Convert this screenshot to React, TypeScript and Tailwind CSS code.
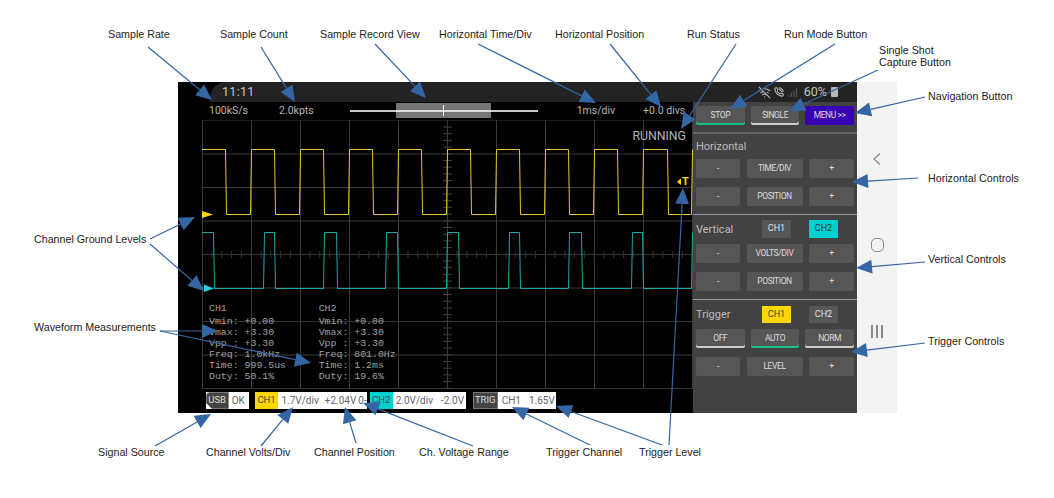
import { PhoneCall, WifiOff } from 'lucide-react';

const labels = [
  { text: 'Sample Rate', left: 108, top: 28 },
  { text: 'Sample Count', left: 220, top: 28 },
  { text: 'Sample Record View', left: 320, top: 28 },
  { text: 'Horizontal Time/Div', left: 439, top: 28 },
  { text: 'Horizontal Position', left: 555, top: 28 },
  { text: 'Run Status', left: 687, top: 28 },
  { text: 'Run Mode Button', left: 784, top: 28 },
  { text: 'Single Shot', left: 879, top: 44 },
  { text: 'Capture Button', left: 879, top: 56 },
  { text: 'Navigation Button', left: 928, top: 90 },
  { text: 'Horizontal Controls', left: 928, top: 172 },
  { text: 'Vertical Controls', left: 928, top: 253 },
  { text: 'Trigger Controls', left: 928, top: 335 },
  { text: 'Channel Ground Levels', left: 34, top: 233 },
  { text: 'Waveform Measurements', left: 34, top: 321 },
  { text: 'Signal Source', left: 98, top: 446 },
  { text: 'Channel Volts/Div', left: 206, top: 446 },
  { text: 'Channel Position', left: 314, top: 446 },
  { text: 'Ch. Voltage Range', left: 419, top: 446 },
  { text: 'Trigger Channel', left: 546, top: 446 },
  { text: 'Trigger Level', left: 639, top: 446 },
];

// [startX, startY, tipX, tipY]
const arrows = [
  [148, 47, 212, 100],
  [261, 47, 295, 102],
  [375, 44, 426, 98],
  [478, 44, 596, 103],
  [610, 44, 661, 107],
  [736, 44, 681, 129],
  [835, 44, 730, 109],
  [878, 70, 789, 111],
  [925, 97, 855, 113],
  [918, 178, 852, 182],
  [925, 262, 856, 268],
  [925, 343, 851, 352],
  [150, 239, 195, 217],
  [150, 244, 204, 291],
  [160, 331, 218, 331],
  [160, 331, 311, 363],
  [155, 446, 211, 414],
  [261, 446, 293, 407],
  [356, 443, 345, 407],
  [473, 446, 363, 403],
  [590, 445, 512, 407],
  [662, 445, 556, 406],
  [669, 445, 683, 188],
];

const gridX = [202, 251, 300, 349, 398, 447, 496, 545, 594, 643, 692];
const gridY = [120, 154, 187.5, 221, 254.6, 288, 321.6, 355, 388.6];

const yellowEdges = [226, 251, 275, 300, 324, 349, 373, 398, 422, 447, 471, 496, 520, 545, 569, 594, 618, 643, 668, 692];
const cyanEdges = [214, 264, 275, 324, 337, 386, 398, 447, 459, 509, 520, 569, 582, 632, 643, 692];

function wavePath(edges: number[], high: number, low: number) {
  let d = `M202 ${high}`;
  let level = high;
  for (const x of edges) {
    const next = level === high ? low : high;
    d += ` L${x - 0.5} ${level} L${x + 0.5} ${next}`;
    level = next;
  }
  return d;
}

function Arrow({ a }: { a: number[] }) {
  const [x1, y1, x2, y2] = a;
  const len = Math.hypot(x2 - x1, y2 - y1);
  const ux = (x2 - x1) / len;
  const uy = (y2 - y1) / len;
  const bx = x2 - ux * 16;
  const by = y2 - uy * 16;
  const px = -uy * 7;
  const py = ux * 7;
  return (
    <g>
      <line x1={x1} y1={y1} x2={bx} y2={by} stroke="#3465a4" strokeWidth="1.2" />
      <polygon points={`${x2},${y2} ${bx + px},${by + py} ${bx - px},${by - py}`} fill="#3465a4" />
    </g>
  );
}

function PanelButton({ label, className = '' }: { label: string; className?: string }) {
  return (
    <div className={`h-[19px] bg-[#565656] rounded-[2px] flex items-center justify-center text-[8.5px] tracking-[-0.4px] text-[#dcdcdc] ${className}`}>
      {label}
    </div>
  );
}

function ControlRow({ label }: { label: string }) {
  return (
    <div className="grid grid-cols-[44px_1fr_45px] gap-[6.5px]">
      <PanelButton label="-" />
      <PanelButton label={label} />
      <PanelButton label="+" />
    </div>
  );
}

function Measurements({ title, rows }: { title: string; rows: string[] }) {
  return (
    <div className="w-[109.7px]">
      <div className="h-[11px] leading-[11px] mb-[2.7px]">{title}</div>
      {rows.map((r) => (
        <div key={r} className="h-[11px] leading-[11px] whitespace-pre">{r}</div>
      ))}
    </div>
  );
}

export default function App() {
  return (
    <div className="relative w-[1054px] h-[498px] bg-white overflow-hidden font-['Liberation_Sans',sans-serif] pt-[82px] pl-[178px]">
      <div className="flex h-[331px] w-[719px] font-[Roboto,sans-serif]">
        <div className="w-[679px] flex flex-col bg-black">
          {/* android status bar */}
          <div className="h-[20px] flex shrink-0">
            <div className="ml-[32px] flex-1 bg-[#232323] rounded-tl-[16px] flex items-center text-[#c4c4c4]">
              <span className="ml-[12px] text-[12.5px] tracking-[0.3px]">11:11</span>
              <div className="ml-auto flex items-center">
                <WifiOff size={13} strokeWidth={2} className="text-[#bbbbbb]" />
                <PhoneCall size={10} strokeWidth={2.4} className="ml-[3px] text-[#dddddd]" />
                <svg width="10" height="11" viewBox="0 0 10 11" className="ml-[4px]">
                  <path d="M1 10V8M3.5 10V6M6 10V4M8.5 10V1" stroke="#555555" strokeWidth="1.2" />
                </svg>
                <span className="ml-[6px] text-[12.5px]">60%</span>
                <div className="ml-[4px] mr-[19px] w-[7px] h-[10px] bg-[#b5b5b5] rounded-[1px]" />
              </div>
            </div>
          </div>

          <div className="flex flex-1 min-h-0">
            {/* scope screen */}
            <div className="w-[515px] flex flex-col">
              <div className="h-[18px] relative flex items-center text-[10.5px] text-[#b5b5b5]">
                <span className="ml-[31px]">100kS/s</span>
                <span className="ml-[31px]">2.0kpts</span>
                <div className="ml-[36px] w-[188px] h-[2px] bg-[#c8c8c8] relative">
                  <div className="absolute left-[46px] top-[-7px] w-[95px] h-[15px] bg-[#8a8a8a]/85" />
                  <div className="absolute left-[46px] top-0 w-[95px] h-[2px] bg-[#dddddd]" />
                  <div className="absolute left-[93px] top-[-5px] w-[1px] h-[11px] bg-white" />
                </div>
                <span className="ml-[39px]">1ms/div</span>
                <span className="ml-[28px]">+0.0 divs</span>
              </div>

              <div className="relative ml-[24px] w-[491px] h-[269px]">
                <svg className="absolute inset-0" width="491" height="269" viewBox="202 120 491 269">
                  {gridX.map((x) => (
                    <line key={x} x1={x + 0.5} y1="120" x2={x + 0.5} y2="389" stroke="#3a3a3a" />
                  ))}
                  {gridY.map((y) => (
                    <line key={y} x1="202" y1={y} x2="692" y2={y} stroke="#3a3a3a" />
                  ))}
                  {Array.from({ length: 40 }, (_, i) => (
                    <line key={i} x1="443" y1={127 + i * 6.7} x2="452" y2={127 + i * 6.7} stroke="#404040" />
                  ))}
                  {Array.from({ length: 49 }, (_, i) => (
                    <line key={i} x1={212 + i * 9.8} y1="251" x2={212 + i * 9.8} y2="258" stroke="#333333" />
                  ))}
                  <path d={wavePath(yellowEdges, 149.5, 214.5)} fill="none" stroke="#e6c62e" />
                  <path d={wavePath(cyanEdges, 232.5, 288.5)} fill="none" stroke="#1fa8a8" />
                  <polygon points="202,211 213,214.5 202,218" fill="#ffd700" />
                  <polygon points="204,284.5 214,288.5 204,292" fill="#1fd0d8" />
                  <polygon points="681,178.5 681,185 677,181.8" fill="#ffd700" />
                </svg>
                <span className="absolute left-[480px] top-[55px] text-[11px] leading-[14px] font-bold text-[#ffd700]">T</span>
                <span className="absolute right-[7px] top-[9px] text-[12.3px] leading-[14px] text-[#b5b5b5]">RUNNING</span>
                <div className="absolute left-[7px] top-[182.5px] flex font-['Liberation_Mono',monospace] text-[9.9px] text-[#a0a0a0]">
                  <Measurements title="CH1" rows={['Vmin: +0.00', 'Vmax: +3.30', 'Vpp : +3.30', 'Freq: 1.0kHz', 'Time: 999.5us', 'Duty: 50.1%']} />
                  <Measurements title="CH2" rows={['Vmin: +0.00', 'Vmax: +3.30', 'Vpp : +3.30', 'Freq: 801.0Hz', 'Time: 1.2ms', 'Duty: 19.6%']} />
                </div>
              </div>

              {/* bottom info chips */}
              <div className="flex mt-[3px] ml-[27.7px] h-[17px] text-[10px] text-[#666666]">
                <div className="w-[43px] bg-white flex items-center">
                  <div className="w-[23px] h-full bg-[#444444] border border-[#777777] rounded-tl-[4px] flex items-center justify-center text-[9.5px] text-[#dddddd] [clip-path:polygon(0_0,100%_0,100%_100%,28%_100%,0_62%)]">USB</div>
                  <span className="ml-[3px]">OK</span>
                </div>
                <div className="ml-[6px] w-[112px] bg-white flex items-center">
                  <div className="w-[24px] h-full bg-[#ffd700] flex items-center justify-center text-[9.5px] text-[#444444]">CH1</div>
                  <span className="ml-[3px]">1.7V/div</span>
                  <span className="ml-[6px]">+2.04V</span>
                  <span className="ml-[2px]">0-</span>
                </div>
                <div className="ml-[3px] w-[96px] bg-white flex items-center">
                  <div className="w-[23px] h-full bg-[#00d0d0] flex items-center justify-center text-[9.5px] text-[#444444]">CH2</div>
                  <span className="ml-[3px]">2.0V/div</span>
                  <span className="ml-[8px]">-2.0V</span>
                </div>
                <div className="ml-[7px] w-[83px] bg-white flex items-center">
                  <div className="w-[25px] h-full bg-[#444444] border border-[#777777] flex items-center justify-center text-[9.5px] text-[#dddddd]">TRIG</div>
                  <span className="ml-[4px]">CH1</span>
                  <span className="ml-[8px]">1.65V</span>
                </div>
              </div>
            </div>

            {/* control panel */}
            <div className="w-[164px] bg-[#424242] flex flex-col text-[#bdbdbd]">
              <div className="px-[3px] pt-[4px] grid grid-cols-3 gap-[6px]">
                <PanelButton label="STOP" className="shadow-[inset_0_-2px_0_#19c08a]" />
                <PanelButton label="SINGLE" className="shadow-[inset_0_-2px_0_#cccccc]" />
                <PanelButton label="MENU >>" className="!bg-[#3700b3]" />
              </div>
              <div className="mt-[7px] h-[2px] bg-[#666666]" />

              <div className="px-[3px] h-[25px] pt-[2px] flex items-center text-[11px]">Horizontal</div>
              <div className="px-[3px] flex flex-col gap-[9px]">
                <ControlRow label="TIME/DIV" />
                <ControlRow label="POSITION" />
              </div>
              <div className="mt-[8px] h-px bg-[#9a9a9a]" />

              <div className="px-[3px] mt-[5px] flex items-center h-[18px] text-[11px]">
                <span className="w-[66px] pt-[2px]">Vertical</span>
                <div className="w-[29px] h-full bg-[#565656] flex items-center justify-center text-[9px] text-[#e0e0e0]">CH1</div>
                <div className="ml-[18px] w-[29px] h-full bg-[#00d0d0] flex items-center justify-center text-[9px] text-[#333333]">CH2</div>
              </div>
              <div className="px-[3px] mt-[6px] flex flex-col gap-[9px]">
                <ControlRow label="VOLTS/DIV" />
                <ControlRow label="POSITION" />
              </div>
              <div className="mt-[8px] h-px bg-[#9a9a9a]" />

              <div className="px-[3px] mt-[6px] flex items-center h-[17px] text-[11px]">
                <span className="w-[66px] pt-[2px]">Trigger</span>
                <div className="w-[29px] h-full bg-[#ffd700] flex items-center justify-center text-[9px] text-[#444444]">CH1</div>
                <div className="ml-[18px] w-[29px] h-full bg-[#565656] flex items-center justify-center text-[9px] text-[#e0e0e0]">CH2</div>
              </div>
              <div className="px-[3px] mt-[6px] grid grid-cols-3 gap-[6px]">
                <PanelButton label="OFF" className="shadow-[inset_0_-2px_0_#cccccc]" />
                <PanelButton label="AUTO" className="shadow-[inset_0_-2px_0_#19c08a]" />
                <PanelButton label="NORM" className="shadow-[inset_0_-2px_0_#cccccc]" />
              </div>
              <div className="px-[3px] mt-[9px]">
                <ControlRow label="LEVEL" />
              </div>
            </div>
          </div>
        </div>

        {/* android nav bar */}
        <div className="w-[40px] bg-[#f3f3f3] flex flex-col items-center pt-[71px]">
          <svg width="8" height="12" viewBox="0 0 8 12">
            <path d="M7 0.5L1 6L7 11.5" fill="none" stroke="#8a8a8a" strokeWidth="1.3" />
          </svg>
          <div className="mt-[73px] w-[13px] h-[14px] border-[1.5px] border-[#8a8a8a] rounded-[5px]" />
          <div className="mt-[73px] flex gap-[3.5px]">
            <div className="w-[1.5px] h-[13px] bg-[#8a8a8a]" />
            <div className="w-[1.5px] h-[13px] bg-[#8a8a8a]" />
            <div className="w-[1.5px] h-[13px] bg-[#8a8a8a]" />
          </div>
        </div>
      </div>

      {/* annotations */}
      {labels.map((l) => (
        <span
          key={l.text}
          className="absolute text-[10.7px] leading-[13px] text-[#1c1c1c] whitespace-nowrap"
          style={{ left: l.left, top: l.top }}
        >
          {l.text}
        </span>
      ))}
      <svg className="absolute inset-0 pointer-events-none" width="1054" height="498">
        {arrows.map((a) => (
          <Arrow key={a.join('-')} a={a} />
        ))}
      </svg>
    </div>
  );
}
